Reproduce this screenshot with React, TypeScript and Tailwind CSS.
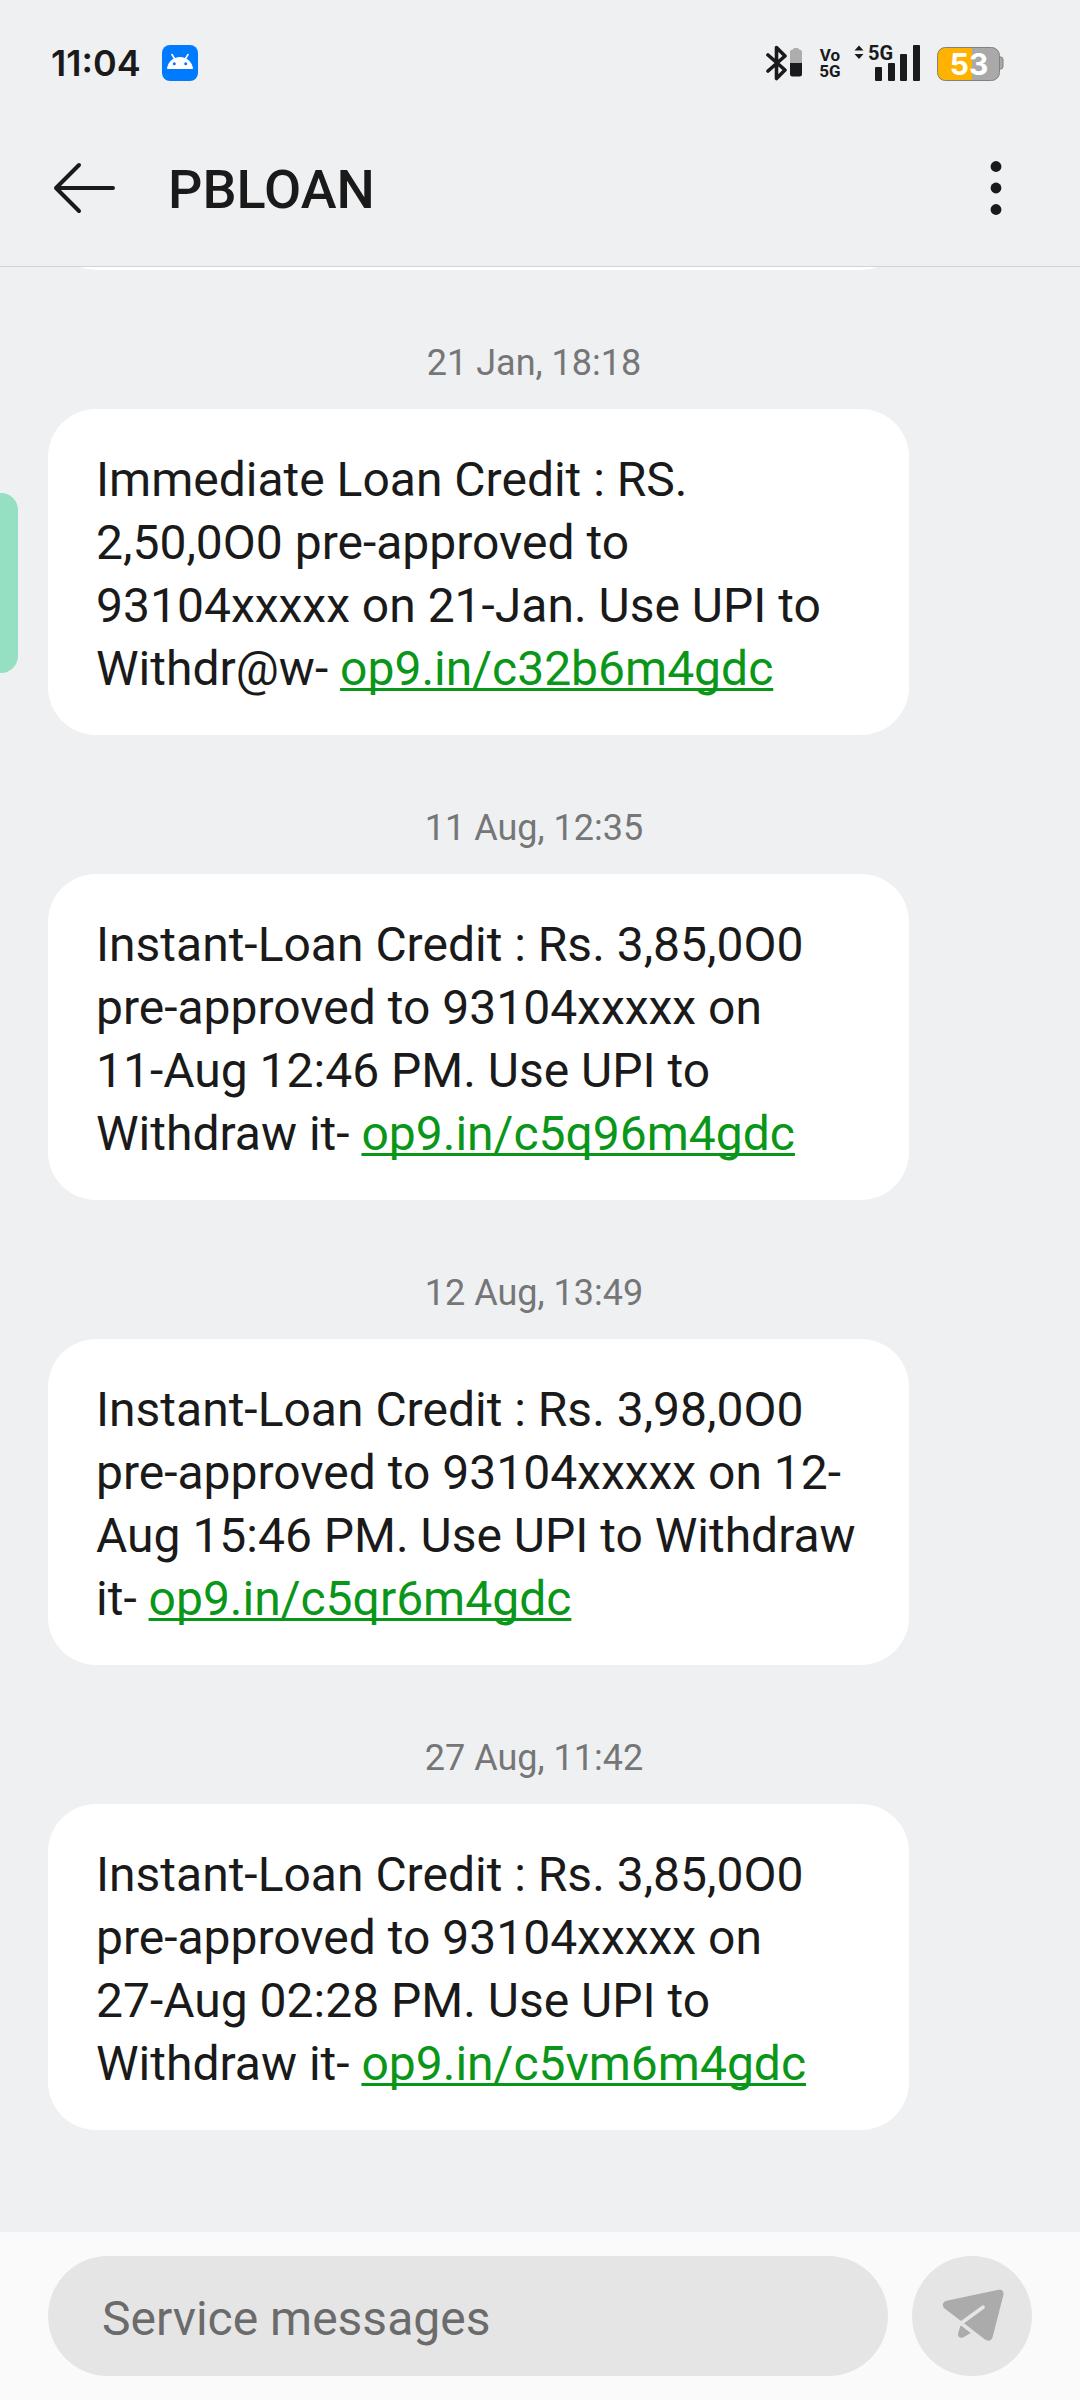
import React from 'react';

type Message = {
  date: string;
  lines: string[];
  link: string;
};

const messages: Message[] = [
  {
    date: '21 Jan, 18:18',
    lines: ['Immediate Loan Credit : RS.', '2,50,0O0 pre-approved to', '93104xxxxx on 21-Jan. Use UPI to', 'Withdr@w-'],
    link: 'op9.in/c32b6m4gdc',
  },
  {
    date: '11 Aug, 12:35',
    lines: ['Instant-Loan Credit : Rs. 3,85,0O0', 'pre-approved to 93104xxxxx on', '11-Aug 12:46 PM. Use UPI to', 'Withdraw it-'],
    link: 'op9.in/c5q96m4gdc',
  },
  {
    date: '12 Aug, 13:49',
    lines: ['Instant-Loan Credit : Rs. 3,98,0O0', 'pre-approved to 93104xxxxx on 12-', 'Aug 15:46 PM. Use UPI to Withdraw', 'it-'],
    link: 'op9.in/c5qr6m4gdc',
  },
  {
    date: '27 Aug, 11:42',
    lines: ['Instant-Loan Credit : Rs. 3,85,0O0', 'pre-approved to 93104xxxxx on', '27-Aug 02:28 PM. Use UPI to', 'Withdraw it-'],
    link: 'op9.in/c5vm6m4gdc',
  },
];

const StatusBar = () => (
  <div className="flex items-center justify-between h-9 mt-[45px] mb-[29px] pl-[51px] pr-[76px]">
    <div className="flex items-center gap-[21px]">
      <span className="font-[Inter,sans-serif] font-semibold text-[36px] leading-9">11:04</span>
      <svg className="w-9 h-9" viewBox="0 0 36 36">
        <rect width="36" height="36" rx="8" fill="#007aff" />
        <path d="M5 24 C5.5 17 11 12 18 12 C25 12 30.5 17 31 24 Z" fill="#fff" />
        <path d="M10 9.5 L13 14.5 M26 9.5 L23 14.5" stroke="#fff" strokeWidth="1.6" strokeLinecap="round" />
        <circle cx="12.3" cy="18.7" r="1.5" fill="#007aff" />
        <circle cx="23.7" cy="18.7" r="1.5" fill="#007aff" />
      </svg>
    </div>

    <div className="flex items-center">
      <svg className="w-[37px] h-9 mr-[17px]" viewBox="0 0 37 36">
        <path d="M2 10 L19 25 L10.5 33.5 V2.5 L19 11 L2 26" fill="none" stroke="#1a1a1a" strokeWidth="3.6" strokeLinecap="round" strokeLinejoin="round" />
        <path d="M24 18 V7 Q24 4.5 27 4.5 Q27 3 28.5 3 H31.5 Q33 3 33 4.5 Q36 4.5 36 7 V18 Z" fill="#adadad" />
        <path d="M24 18 H36 V29 Q36 31.5 33.5 31.5 H26.5 Q24 31.5 24 29 Z" fill="#1a1a1a" />
      </svg>
      <span className="flex flex-col items-center w-5 mr-[14px] font-bold text-[17px] leading-4">
        <span>Vo</span>
        <span>5G</span>
      </span>
      <svg className="w-[67px] h-9 mr-4 overflow-visible" viewBox="0 0 67 36" fill="#1a1a1a">
        <path d="M5 0.5 L9.5 5.5 H0.5 Z M0.5 9 H9.5 L5 14 Z" />
        <text x="14" y="15" fontSize="20" fontWeight="700">5G</text>
        <rect x="21" y="22" width="7" height="14" rx="1" />
        <rect x="34" y="18" width="7" height="18" rx="1" />
        <rect x="46" y="9" width="7" height="27" rx="1" />
        <rect x="59" y="0" width="7" height="36" rx="1" />
      </svg>
      <svg className="w-[67px] h-9" viewBox="0 0 67 36">
        <path d="M62 12 H64 Q66 12 66 15 V21 Q66 24 64 24 H62 Z" fill="#a9a9a9" stroke="#808080" />
        <rect x="0.5" y="2.5" width="62" height="33" rx="8" fill="#a9a9a9" />
        <path d="M35 2.5 H8.5 Q0.5 2.5 0.5 10.5 V27.5 Q0.5 35.5 8.5 35.5 H35 Z" fill="#ffb300" />
        <rect x="0.5" y="2.5" width="62" height="33" rx="8" fill="none" stroke="#808080" />
        <text x="32" y="30" fontSize="30" fontWeight="700" textAnchor="middle" fill="#fff" className="font-[Inter,sans-serif]">53</text>
      </svg>
    </div>
  </div>
);

const Header = () => (
  <header className="flex items-center h-[157px] pl-12 pr-[60px] border-b border-[#d2d3d5]">
    <button type="button" aria-label="Back" className="mr-12">
      <svg className="w-[72px] h-[72px]" viewBox="0 0 72 72" fill="none" stroke="#1a1a1a" strokeWidth="4" strokeLinecap="round" strokeLinejoin="round">
        <path d="M31 13 L8 36 L31 59 M8 36 H65" />
      </svg>
    </button>
    <h1 className="flex-1 pt-[3px] text-[54px] leading-[64px] font-medium">PBLOAN</h1>
    <button type="button" aria-label="More options">
      <svg className="w-12 h-16" viewBox="0 0 48 64" fill="#1a1a1a">
        <circle cx="24" cy="10.5" r="5.4" />
        <circle cx="24" cy="32" r="5.4" />
        <circle cx="24" cy="53.5" r="5.4" />
      </svg>
    </button>
  </header>
);

const MessageItem = ({ message }: { message: Message }) => (
  <li className="pt-[72px]">
    <p className="pr-3 text-center text-[36px] leading-[42px] text-[#757677]">{message.date}</p>
    <div className="mt-[25px] ml-12 mr-[171px] pt-[39px] pb-[35px] px-12 rounded-[48px] bg-white text-[48px] leading-[63px]">
      <p className="whitespace-nowrap">
        {message.lines.map((line, i) => (
          <React.Fragment key={line}>
            {i > 0 && <br />}
            {line}
          </React.Fragment>
        ))}{' '}
        <a href={`https://${message.link}`} className="text-[#0a9618] underline decoration-[3px] underline-offset-[3px] [text-decoration-skip-ink:none]">
          {message.link}
        </a>
      </p>
    </div>
  </li>
);

const Composer = () => (
  <footer className="flex items-center gap-6 px-12 py-6 bg-[#fafafa]">
    <input
      type="text"
      aria-label="Service messages"
      placeholder="Service messages"
      className="flex-1 min-w-0 h-[120px] pl-[54px] pr-12 pt-1 rounded-full bg-[#e5e5e5] text-[48px] placeholder:text-[#6b6b6b] outline-none"
    />
    <button type="button" aria-label="Send" className="w-[120px] h-[120px] rounded-full bg-[#e5e5e5]">
      <svg className="w-full h-full" viewBox="0 0 120 120" fill="#ababab">
        <path d="M34.5 44.8 L86.5 33.8 Q92 33.2 91.4 39 L80.5 81.5 Q78.5 86.5 73 83.6 L52 67.3 L48.7 64.7 L32 52 Q28.5 47 34.5 44.8 Z" />
        <path d="M49.3 69.7 L58.7 77 L51 81.5 Q46 82.5 46 78 L48.3 70 Z" />
        <path d="M50 66.5 L71 51.3" stroke="#e5e5e5" strokeWidth="3.7" strokeLinecap="round" />
      </svg>
    </button>
  </footer>
);

const App = () => (
  <div className="relative flex flex-col min-h-screen bg-[#eff0f2] text-[#1a1a1a] font-[Roboto,sans-serif]">
    <StatusBar />
    <Header />
    <main className="flex-1 pb-[102px]">
      {/* bottom edge of the message scrolled under the header */}
      <div className="flex items-end h-[3px] ml-12 mr-[171px] overflow-hidden">
        <div className="flex-1 h-24 rounded-[48px] bg-white" />
      </div>
      <ul>
        {messages.map((message) => (
          <MessageItem key={message.date} message={message} />
        ))}
      </ul>
    </main>
    <Composer />
    {/* edge panel handle */}
    <div className="absolute left-0 top-[493px] w-[18px] h-[180px] rounded-r-[17px] bg-[#95e0c2]" />
  </div>
);

export default App;
